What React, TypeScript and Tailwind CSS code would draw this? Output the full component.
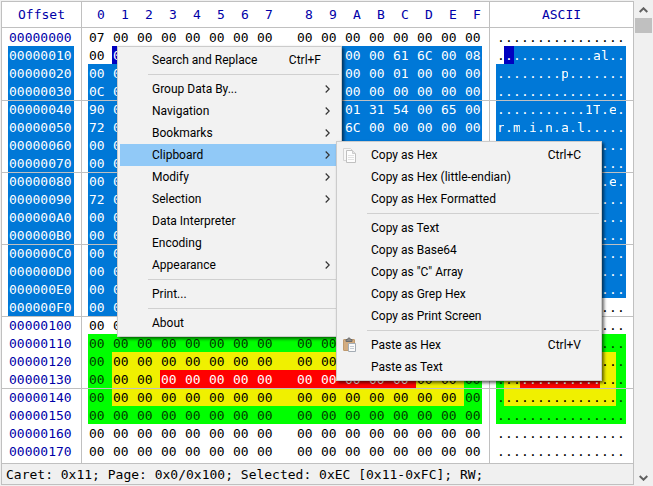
import React from 'react';

const HEX = '0123456789ABCDEF'.split('');

const BYTES: Record<number, Record<number, string>> = {
  0: { 0: '07' },
  1: { 12: '61', 13: '6C', 15: '08' },
  2: { 8: '70', 12: '01' },
  3: { 0: '0C' },
  4: { 0: '90', 10: '01', 11: '31', 12: '54', 14: '65' },
  5: { 0: '72', 2: '6D', 4: '69', 6: '6E', 8: '61', 10: '6C' },
  8: { 14: '65' },
  9: { 0: '72' },
};

const byteAt = (row: number, col: number) => BYTES[row]?.[col] ?? '00';

const charOf = (byte: string) => {
  const code = parseInt(byte, 16);
  return code > 32 && code < 127 ? String.fromCharCode(code) : '.';
};

const TONES = {
  plain: 'text-black',
  selected: 'bg-[#0078d7] text-white',
  caret: 'bg-[#0000c0] text-white',
  green: 'bg-[#00ff00] text-[#003c00]',
  yellow: 'bg-[#f0f000] text-black',
  red: 'bg-[#ff0000] text-white',
};
type Tone = keyof typeof TONES;

function toneAt(row: number, col: number): Tone {
  const address = row * 16 + col;
  if (address === 0x11) return 'caret';
  if (address > 0x11 && address <= 0xfc) return 'selected';
  if (row < 17 || row > 21) return 'plain';
  if (row === 17 || row === 21 || col === 0 || col === 15) return 'green';
  if (row === 19 && col >= 3 && col <= 12) return 'red';
  return 'yellow';
}

function hexWidth(col: number) {
  if (col === 7) return 'w-10';
  return col === 15 ? 'w-[18px]' : 'w-6';
}

function hexCell(col: number) {
  if (col === 0) return 'border-l border-[#c0c0c0] pl-[6px]';
  return col === 15 ? 'pr-[7px]' : '';
}

function HexTable() {
  return (
    <table className="w-full border-separate border-spacing-0 text-left">
      <thead className="text-[#0000a8]">
        <tr>
          <th scope="col" className="h-[26px] w-[79px] border-b border-[#c0c0c0] p-0 text-center font-normal">
            Offset
          </th>
          {HEX.map((digit, col) => (
            <th key={digit} scope="col" className={`border-b border-[#c0c0c0] p-0 font-normal ${hexCell(col)}`}>
              <div className={`pl-[9px] ${hexWidth(col)}`}>{digit}</div>
            </th>
          ))}
          <th scope="col" className="w-full border-b border-l border-[#c0c0c0] p-0 text-center font-normal">
            ASCII
          </th>
        </tr>
      </thead>
      <tbody className="leading-[20px]">
        {Array.from({ length: 24 }, (_, row) => (
          <tr key={row} className="relative">
            <th scope="row" className="p-0 pr-[7px] pl-[6px] align-top font-normal">
              {row > 0 && row % 4 === 0 && <span className="absolute inset-x-0 top-0 h-px bg-[#c0c0c0]" />}
              <div
                className={`h-[18px] w-[66px] pl-px ${
                  row >= 1 && row <= 15 ? 'bg-[#0078d7] text-white' : 'text-[#0000a8]'
                }`}
              >
                {(row * 16).toString(16).toUpperCase().padStart(8, '0')}
              </div>
            </th>
            {HEX.map((digit, col) => (
              <td key={digit} className={`p-0 align-top ${hexCell(col)}`}>
                <div className={`h-[18px] pl-px ${hexWidth(col)} ${TONES[toneAt(row, col)]}`}>{byteAt(row, col)}</div>
              </td>
            ))}
            <td className={`border-l border-[#c0c0c0] p-0 pl-[6px] align-top ${row === 23 ? 'pb-[3px]' : ''}`}>
              <div className="flex h-[18px]">
                {HEX.map((digit, col) => (
                  <span
                    key={digit}
                    className={`pl-px ${col === 15 ? 'w-[10px]' : 'w-2'} ${TONES[toneAt(row, col)]} ${
                      row === 1 && col === 2 ? 'shadow-[inset_2px_0_0_#0000c0]' : ''
                    }`}
                  >
                    {charOf(byteAt(row, col))}
                  </span>
                ))}
              </div>
            </td>
          </tr>
        ))}
      </tbody>
    </table>
  );
}

function CopyIcon() {
  return (
    <svg viewBox="0 0 16 16" className="h-4 w-4">
      <path d="M1.500 1.500h7l2 2v10h-9z" fill="#f7f7f7" stroke="#d4d4d4" />
      <path d="M4.500 3.500h6l3 3v9h-9z" fill="#fdfdfd" stroke="#c0c0c0" />
      <path d="M10.500 3.500v3h3" fill="#e4e4e4" stroke="#cccccc" />
      <path d="M6 8.500h6M6 10.500h6M6 12.500h6" stroke="#e2e2e2" />
    </svg>
  );
}

function PasteIcon() {
  return (
    <svg viewBox="0 0 16 16" className="h-4 w-4">
      <rect x="1.500" y="2.500" width="11" height="11" rx="0.500" fill="#d3ac80" stroke="#c09a6e" />
      <path d="M4 4.500V2.500h1.500c0-2 3-2 3 0H10v2z" fill="#8b8b8b" stroke="#6a6a6a" />
      <path d="M6.500 6.500h7v8h-7z" fill="#fafafa" stroke="#a4acb4" />
      <path d="M8 9.500h4M8 11.500h4" stroke="#c4ccd4" />
    </svg>
  );
}

type Entry = { label: string; keys?: string; sub?: boolean; active?: boolean; icon?: React.ReactNode } | null;

const MAIN: Entry[] = [
  { label: 'Search and Replace', keys: 'Ctrl+F' },
  null,
  { label: 'Group Data By...', sub: true },
  { label: 'Navigation', sub: true },
  { label: 'Bookmarks', sub: true },
  { label: 'Clipboard', sub: true, active: true },
  { label: 'Modify', sub: true },
  { label: 'Selection', sub: true },
  { label: 'Data Interpreter' },
  { label: 'Encoding' },
  { label: 'Appearance', sub: true },
  null,
  { label: 'Print...' },
  null,
  { label: 'About' },
];

const CLIPBOARD: Entry[] = [
  { label: 'Copy as Hex', keys: 'Ctrl+C', icon: <CopyIcon /> },
  { label: 'Copy as Hex (little-endian)' },
  { label: 'Copy as Hex Formatted' },
  null,
  { label: 'Copy as Text' },
  { label: 'Copy as Base64' },
  { label: 'Copy as "C" Array' },
  { label: 'Copy as Grep Hex' },
  { label: 'Copy as Print Screen' },
  null,
  { label: 'Paste as Hex', keys: 'Ctrl+V', icon: <PasteIcon /> },
  { label: 'Paste as Text' },
];

function Menu({ entries, place }: { entries: Entry[]; place: string }) {
  return (
    <div
      role="menu"
      className={`absolute border border-[#cccccc] bg-[#f2f2f2] p-[2px] font-[Roboto,'Open_Sans',sans-serif] text-[12px] text-black shadow-[2px_2px_3px_rgba(0,0,0,0.6)] ${place}`}
    >
      {entries.map((entry, i) =>
        entry === null ? (
          <div key={i} role="separator" className="ml-7 h-[7px] pt-[3px]">
            <div className="h-px bg-[#d0d0d0]" />
          </div>
        ) : (
          <button
            key={i}
            type="button"
            role="menuitem"
            className={`flex h-[22px] w-full items-center text-left whitespace-nowrap ${entry.active ? 'bg-[#91c9f7]' : ''}`}
          >
            <span className="flex w-8 shrink-0 pl-[3px]">{entry.icon}</span>
            <span className="flex-1">{entry.label}</span>
            {entry.keys && <span className="pr-[18px]">{entry.keys}</span>}
            {entry.sub && (
              <svg viewBox="0 0 5 8" className="mr-[9px] h-2 w-[5px]" fill="none" stroke="#333333" strokeWidth="1.2">
                <path d="M0.700 0.500L4.200 4L0.700 7.500" />
              </svg>
            )}
          </button>
        ),
      )}
    </div>
  );
}

export default function App() {
  return (
    <main className="relative flex w-full bg-[#f0f0f0] pt-px pl-px font-['DejaVu_Sans_Mono','Liberation_Mono',monospace] text-[13px] leading-[18px]">
      <section className="mb-px flex-1 border border-[#c0c0c0] bg-white">
        <HexTable />
        <footer className="h-[21px] border-t border-[#c0c0c0] bg-[#f0f0f0] pl-1 leading-[21px] whitespace-nowrap text-black">
          Caret: 0x11; Page: 0x0/0x100; Selected: 0xEC [0x11-0xFC]; RW;
        </footer>
      </section>
      <aside className="ml-px flex w-[18px] flex-col justify-between bg-[#f0f0f0]">
        <div>
          <button type="button" aria-label="Scroll up" className="flex h-[17px] w-[17px] items-center justify-center">
            <svg viewBox="0 0 9 6" className="h-[6px] w-[9px]" fill="none" stroke="#606060" strokeWidth="2">
              <path d="M0.700 5L4.500 1.300L8.300 5" />
            </svg>
          </button>
          <div className="h-[15px] w-[17px] bg-[#c0c0c0]" />
        </div>
        <button type="button" aria-label="Scroll down" className="flex h-[17px] w-[17px] items-center justify-center">
          <svg viewBox="0 0 9 6" className="h-[6px] w-[9px]" fill="none" stroke="#606060" strokeWidth="2">
            <path d="M0.700 1L4.500 4.700L8.300 1" />
          </svg>
        </button>
      </aside>
      <Menu entries={MAIN} place="top-[46px] left-[117px] w-[225px]" />
      <Menu entries={CLIPBOARD} place="top-[141px] left-[336px] w-[266px]" />
    </main>
  );
}
